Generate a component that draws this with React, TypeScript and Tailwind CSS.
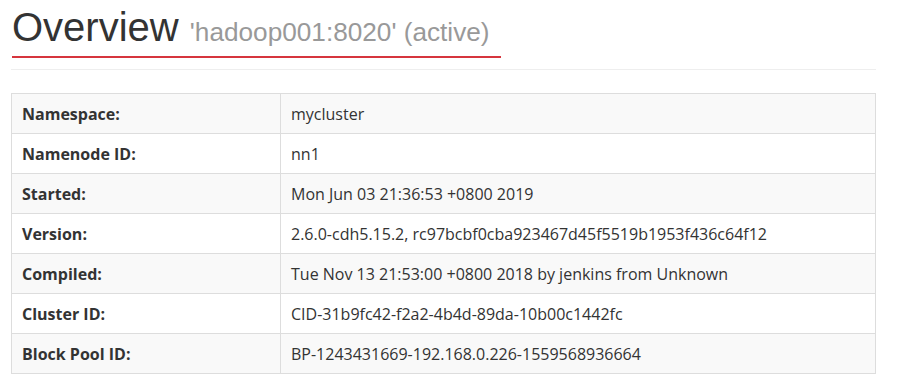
const rows: [string, string][] = [
  ["Namespace:", "mycluster"],
  ["Namenode ID:", "nn1"],
  ["Started:", "Mon Jun 03 21:36:53 +0800 2019"],
  ["Version:", "2.6.0-cdh5.15.2, rc97bcbf0cba923467d45f5519b1953f436c64f12"],
  ["Compiled:", "Tue Nov 13 21:53:00 +0800 2018 by jenkins from Unknown"],
  ["Cluster ID:", "CID-31b9fc42-f2a2-4b4d-89da-10b00c1442fc"],
  ["Block Pool ID:", "BP-1243431669-192.168.0.226-1559568936664"],
];

export default function App() {
  return (
    <div className="w-[904px] h-[379px] bg-white overflow-hidden pl-[11px]">
      <div className="w-[865px]">
        <div className="w-[489px] h-[58px] ml-px border-b-2 border-[#d6353d] pt-[6px]">
          <h1 className="font-['Liberation_Sans',Arial,sans-serif] text-[40px] leading-[42px] text-[#333] whitespace-nowrap">
            Overview{" "}
            <small className="text-[26.2px] text-[#999]">'hadoop001:8020' (active)</small>
          </h1>
        </div>
        <div className="mt-[11px] border-b border-[#eee]" />

        <table className="mt-[23px] w-full border-collapse border border-[#ddd] font-['Open_Sans','Noto_Sans',sans-serif] text-[16px] text-[#333]">
          <tbody>
            {rows.map(([k, v], i) => (
              <tr key={k} className={i % 2 === 0 ? "bg-[#f9f9f9]" : "bg-white"}>
                <th className="w-[269px] h-[40px] border border-[#ddd] px-[10px] text-left font-bold align-middle">
                  {k}
                </th>
                <td className="h-[40px] border border-[#ddd] px-[10px] align-middle">{v}</td>
              </tr>
            ))}
          </tbody>
        </table>
      </div>
    </div>
  );
}
